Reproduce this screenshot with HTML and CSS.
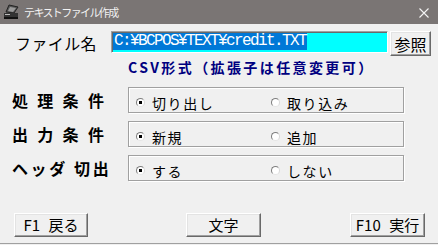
FILE: index.html
```html
<!DOCTYPE html>
<html lang="ja">
<head>
<meta charset="utf-8">
<title>テキストファイル作成</title>
<link rel="stylesheet" href="styles.css">
</head>
<body>
<div class="window">
  <div class="titlebar">
    <svg class="app-icon" width="16" height="16" viewBox="0 0 16 16">
      <polygon points="6,1 15,3 11,9 3,8" fill="#555" stroke="#222" stroke-width="1"/>
      <polygon points="7,3 13,4 10,8 5,7" fill="#9a9a9a"/>
      <rect x="1" y="9" width="14" height="4" fill="#333"/>
      <rect x="2" y="10" width="5" height="1" fill="#bbb"/>
      <rect x="1" y="13" width="14" height="2" fill="#111"/>
    </svg>
    <span class="title">テキストファイル作成</span>
    <svg class="close" width="10" height="10" viewBox="0 0 10 10">
      <path d="M0.5 0.5 L9.5 9.5 M9.5 0.5 L0.5 9.5" stroke="#f4f4f4" stroke-width="1.1"/>
    </svg>
  </div>

  <div class="file-row">
    <span class="file-label">ファイル名</span>
    <div class="path-box"><span class="sel">C:¥BCPOS¥TEXT¥credit.TXT</span></div>
    <button class="btn btn-ref">参照</button>
  </div>

  <div class="note">CSV形式（拡張子は任意変更可）</div>

  <div class="opt-row">
    <span class="opt-label">処理条件</span>
    <div class="group">
      <span class="radio-item"><span class="radio checked"></span><span class="rtext">切り出し</span></span>
      <span class="radio-item"><span class="radio"></span><span class="rtext">取り込み</span></span>
    </div>
  </div>
  <div class="opt-row">
    <span class="opt-label">出力条件</span>
    <div class="group">
      <span class="radio-item"><span class="radio checked"></span><span class="rtext">新規</span></span>
      <span class="radio-item"><span class="radio"></span><span class="rtext">追加</span></span>
    </div>
  </div>
  <div class="opt-row">
    <span class="opt-label opt-label-hd">ヘッダ 切出</span>
    <div class="group">
      <span class="radio-item"><span class="radio checked"></span><span class="rtext">する</span></span>
      <span class="radio-item"><span class="radio"></span><span class="rtext">しない</span></span>
    </div>
  </div>

  <div class="btn-row">
    <button class="btn btn-foot btn-back">F1 戻る</button>
    <button class="btn btn-foot btn-char">文字</button>
    <button class="btn btn-foot btn-run">F10 実行</button>
  </div>
  <div class="bottom-line"></div>
</div>
</body>
</html>
```

FILE: styles.css
```css
html, body {
  margin: 0;
  padding: 0;
}
body {
  width: 438px;
  height: 245px;
  overflow: hidden;
  background: #f0f0f0;
  font-family: "Noto Sans CJK JP", sans-serif;
  color: #000;
}
.window {
  display: flex;
  flex-direction: column;
  width: 438px;
  height: 245px;
}
.titlebar {
  height: 24px;
  flex: none;
  background: #7a7574;
  display: flex;
  align-items: center;
}
.app-icon {
  margin-left: 3px;
  flex: none;
}
.title {
  margin-left: 5px;
  font-size: 11px;
  letter-spacing: -1.6px;
  color: #f2f2f2;
  line-height: 24px;
  white-space: nowrap;
}
.close {
  margin-left: auto;
  margin-right: 9px;
  margin-top: 1px;
  flex: none;
}

/* file row */
.file-row {
  display: flex;
  align-items: flex-start;
  margin-top: 7px;
  flex: none;
}
.file-label {
  flex: none;
  width: 111px;
  padding-left: 15px;
  box-sizing: border-box;
  font-size: 16px;
  line-height: 25px;
  letter-spacing: 0.4px;
  white-space: nowrap;
}
.path-box {
  flex: none;
  width: 277px;
  height: 22px;
  box-sizing: border-box;
  background: #00ffff;
  border-top: 1px solid #a0a0a0;
  border-left: 1px solid #a0a0a0;
  border-right: 1px solid #ffffff;
  border-bottom: 1px solid #ffffff;
  box-shadow: inset 1px 1px #696969;
  padding: 1px 0 0 1px;
  overflow: hidden;
  white-space: nowrap;
  display: flex;
  align-items: flex-start;
}
.sel {
  display: block;
  background: #0078d7;
  color: #fff;
  font-family: "Liberation Mono", monospace;
  font-size: 16px;
  letter-spacing: -1.6px;
  line-height: 17px;
  height: 17px;
  padding-left: 1px;
  padding-right: 1px;
}
.btn {
  flex: none;
  font-family: "Noto Sans CJK JP", sans-serif;
  background: #f0f0f0;
  color: #000;
  border-style: solid;
  border-width: 1px;
  border-color: #ffffff #696969 #696969 #ffffff;
  box-shadow: inset -1px -1px #a0a0a0, inset 1px 1px #e3e3e3;
  padding: 0;
  margin: 0;
  box-sizing: border-box;
  white-space: nowrap;
}
.btn-ref {
  width: 41px;
  height: 25px;
  margin-left: 2px;
  font-size: 16px;
  line-height: 20px;
  letter-spacing: 0;
}

.note {
  flex: none;
  margin-top: 3px;
  margin-left: 128px;
  font-size: 14px;
  font-weight: bold;
  line-height: 16px;
  letter-spacing: 2.4px;
  color: #000080;
  white-space: nowrap;
}

/* option rows */
.opt-row {
  flex: none;
  display: flex;
  align-items: flex-start;
  margin-top: 8px;
}
.note + .opt-row {
  margin-top: 12px;
}
.opt-label {
  flex: none;
  width: 128px;
  box-sizing: border-box;
  padding-left: 12px;
  padding-top: 1px;
  font-size: 16px;
  font-weight: bold;
  line-height: 25px;
  letter-spacing: 9.3px;
  white-space: nowrap;
}
.opt-label-hd {
  letter-spacing: 2.6px;
}
.group {
  flex: none;
  width: 276px;
  height: 26px;
  box-sizing: border-box;
  border: 1px solid #a0a0a0;
  box-shadow: inset 1px 1px #ffffff, 1px 1px #ffffff;
  display: grid;
  grid-template-columns: 135px 1fr;
  align-items: center;
  padding: 5px 0 0 7px;
}
.radio-item {
  display: flex;
  align-items: center;
}
.radio {
  position: relative;
  width: 9px;
  height: 9px;
  box-sizing: border-box;
  border-radius: 50%;
  background: #fff;
  border: 1px solid;
  border-color: #7e7e7e #d8d8d8 #e6e6e6 #7e7e7e;
  flex: none;
}
.radio.checked::after {
  content: "";
  position: absolute;
  left: 2px;
  top: 2px;
  width: 3px;
  height: 3px;
  background: #000;
}
.rtext {
  margin-left: 7px;
  font-size: 14px;
  line-height: 16px;
  letter-spacing: 1.6px;
  white-space: nowrap;
}

/* footer buttons */
.btn-row {
  flex: none;
  display: flex;
  margin-top: 32px;
}
.btn-foot {
  height: 24px;
  width: 75px;
  font-size: 15px;
  line-height: 20px;
  word-spacing: 5px;
}
.btn-back {
  width: 74px;
  margin-left: 14px;
}
.btn-char {
  margin-left: 98px;
}
.btn-run {
  margin-left: 89px;
}
.bottom-line {
  flex: none;
  margin-top: 6px;
  height: 1px;
  background: #a0a0a0;
}
```
